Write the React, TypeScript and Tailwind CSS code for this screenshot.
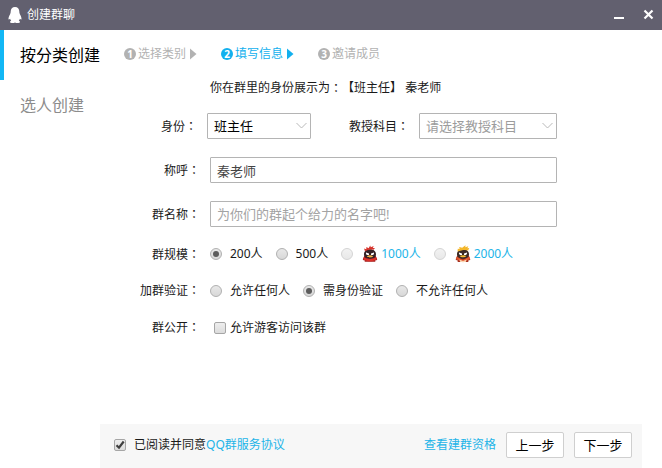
import { useState, type ReactNode } from "react";
import { clsx } from "clsx";

function PenguinLogo() {
  return (
    <svg width="14" height="18" viewBox="0 0 14 18" fill="#fff" aria-hidden="true">
      <path d="M7 1C4.300 1 2.700 3 2.700 5.600c0 1-.1 1.600-.6 2.600C1.100 9.900.4 11.500.5 13c.1.900.8.700 1.600-.2.200.8.500 1.400 1.100 2-.8.300-1.200.7-1.200 1.200 0 .8 1.200 1.100 2.500 1.100 1 0 1.900-.2 2.500-.6.600.4 1.500.6 2.500.6 1.300 0 2.500-.3 2.500-1.100 0-.5-.4-.9-1.200-1.200.6-.6.900-1.200 1.100-2 .8.900 1.500 1.100 1.600.2.100-1.500-.6-3.100-1.600-4.800-.5-1-.6-1.600-.6-2.600C11.300 3 9.700 1 7 1z" />
    </svg>
  );
}

function RedPenguin() {
  return (
    <svg width="16" height="18" viewBox="0 0 16 18" className="shrink-0" aria-hidden="true">
      <path d="M2.500 10.500.9 14c-.2 1.200.6 1.600 1.400.8l.5 1.900h10.400l.5-1.900c.8.800 1.600.4 1.400-.8l-1.600-3.500z" fill="#a31d1b" />
      <path d="M8 4.200c-3.700 0-6 2.200-6 5 0 2.900 2.400 4.600 6 4.600s6-1.700 6-4.600c0-2.800-2.300-5-6-5z" fill="#352125" />
      <path d="M3 6.300 2 3.500l2.300.7L4.400 2l2.200 1.300L8.200.6l.6 1.700L11.700.9l-.9 2 2.200.1-1.500 1.700C9.500 4.200 5.500 4.600 3 6.300z" fill="#d8322b" />
      <path d="M4 7.400 7 8.600v1.500H5.100C4.200 9.500 3.800 8.500 4 7.400z" fill="#fff" />
      <path d="M12 7.400 9 8.600v1.500h1.900c.9-.6 1.300-1.600 1.100-2.700z" fill="#fff" />
      <path d="M4.800 11.200C6.800 10 9.200 10 11.200 11.200c-1.200 1.600-5.200 1.600-6.400 0z" fill="#f0b24a" />
      <path d="M1.800 12.200c3.600 2.300 8.800 2.300 12.400 0l.3 2.200c-3.700 2.400-9.300 2.400-13 0z" fill="#dc3029" />
    </svg>
  );
}

function GoldPenguin() {
  return (
    <svg width="16" height="18" viewBox="0 0 16 18" className="shrink-0" aria-hidden="true">
      <path d="M2.200 10.500.8 14c-.2 1.200.6 1.600 1.400.8l.6 2.200h10.400l.6-2.200c.8.800 1.600.4 1.400-.8l-1.400-3.500z" fill="#a83220" />
      <path d="M8 4.200c-3.700 0-6 2.200-6 5 0 2.900 2.400 4.600 6 4.600s6-1.700 6-4.600c0-2.800-2.300-5-6-5z" fill="#3b2a25" />
      <path d="M2.500 6.500 2.800 3.800l1.800.2L4.200 2l3 .8L10.500.3l-.2 1.900 3-1-.9 2 1.900-.1-1.200 2.500C10.500 4.300 6.300 5.200 2.500 6.500z" fill="#f4b72a" />
      <path d="M4 7.600 7 8.600v1.500H5.100C4.200 9.600 3.800 8.600 4 7.600z" fill="#fff" />
      <path d="M12 7.600 9 8.600v1.500h1.900c.9-.5 1.300-1.500 1.100-2.500z" fill="#fff" />
      <path d="M4.600 11c2.200-1 4.600-1 6.800 0-1.300 1.800-5.500 1.800-6.800 0z" fill="#f7bf35" />
      <path d="M1.600 11.800 8 15l6.400-3.200.4 2.200L8 17.300 1.200 14z" fill="#e4572c" />
      <path d="M4.300 14.400 8 16l3.700-1.600-1 2.600H5.300z" fill="#fbd7b4" />
    </svg>
  );
}

// The TC face centres the full-width colon in its box
function Colon() {
  return <span className="font-['Noto_Sans_CJK_TC',sans-serif]">：</span>;
}

function Step({ index, label, active, last }: { index: number; label: string; active?: boolean; last?: boolean }) {
  return (
    <li
      aria-current={active ? "step" : undefined}
      className={clsx("flex items-center gap-0.5", active ? "text-[#12b0ee]" : "text-[#b2b2b2]")}
    >
      <span
        className={clsx(
          "grid size-3 place-items-center rounded-full text-[10px] leading-none font-bold text-white",
          active ? "bg-[#12b0ee]" : "bg-[#b2b2b2]"
        )}
      >
        {index}
      </span>
      <span>{label}</span>
      {!last && (
        <svg width="7" height="12" viewBox="0 0 7 12" fill="currentColor" className="ml-0.5" aria-hidden="true">
          <path d="M0 0.500 6.500 6 0 11.500z" />
        </svg>
      )}
    </li>
  );
}

function SelectBox({
  id,
  options,
  muted,
  className,
}: {
  id: string;
  options: string[];
  muted?: boolean;
  className?: string;
}) {
  return (
    <div className={clsx("relative", className)}>
      <select
        id={id}
        className={clsx(
          "h-[26px] w-full appearance-none rounded-[1px] border border-[#b4b4b4] bg-white px-1.5 text-[13px] outline-none",
          muted ? "text-[#9c9c9c]" : "text-black"
        )}
      >
        {options.map((o) => (
          <option key={o}>{o}</option>
        ))}
      </select>
      <svg
        width="11"
        height="7"
        viewBox="0 0 11 7"
        fill="none"
        stroke="#b9b9b9"
        className="pointer-events-none absolute top-1/2 right-1 -translate-y-1/2"
        aria-hidden="true"
      >
        <path d="M.5.5l5 5 5-5" />
      </svg>
    </div>
  );
}

function Field({ label, htmlFor, children }: { label: string; htmlFor: string; children: ReactNode }) {
  return (
    <div className="flex items-center gap-2.5">
      <label htmlFor={htmlFor} className="w-[100px] shrink-0 text-right">
        {label}
        <Colon />
      </label>
      {children}
    </div>
  );
}

function OptionRow({ label, children }: { label: string; children: ReactNode }) {
  return (
    <fieldset className="flex h-5 items-center gap-2.5">
      <legend className="float-left w-[100px] shrink-0 text-right">
        {label}
        <Colon />
      </legend>
      <div className="flex items-center gap-[13px]">{children}</div>
    </fieldset>
  );
}

function Radio({
  name,
  value,
  selected,
  onSelect,
  disabled,
  icon,
}: {
  name: string;
  value: string;
  selected?: string;
  onSelect?: (value: string) => void;
  disabled?: boolean;
  icon?: ReactNode;
}) {
  return (
    <label className={clsx("flex items-center gap-2 whitespace-nowrap", disabled && "text-[#22b4e8]")}>
      <span className="grid size-3 place-items-center">
        <input
          type="radio"
          name={name}
          value={value}
          checked={selected === value}
          disabled={disabled}
          onChange={() => onSelect?.(value)}
          className="peer col-start-1 row-start-1 size-3 appearance-none rounded-full border border-[#b0b0b0] bg-linear-to-b from-[#e8e8e8] to-[#d8d8d8] disabled:border-[#d4d4d4] disabled:from-[#f2f2f2] disabled:to-[#e8e8e8]"
        />
        <span className="pointer-events-none col-start-1 row-start-1 hidden size-1.5 rounded-full bg-[#5c5c5c] peer-checked:block" />
      </span>
      <span className={clsx("flex items-center gap-[3px]", icon && "pl-px")}>
        {icon}
        {value}
      </span>
    </label>
  );
}

function Checkbox({ id, defaultChecked }: { id: string; defaultChecked?: boolean }) {
  return (
    <span className="grid size-3 place-items-center">
      <input
        id={id}
        type="checkbox"
        defaultChecked={defaultChecked}
        className="peer col-start-1 row-start-1 size-3 appearance-none rounded-[2px] border border-[#a6a6a6] bg-linear-to-b from-[#eeeeee] to-[#dcdcdc]"
      />
      <svg
        width="10"
        height="10"
        viewBox="0 0 10 10"
        fill="none"
        stroke="#3f3f3f"
        strokeWidth="2.2"
        className="pointer-events-none col-start-1 row-start-1 hidden peer-checked:block"
        aria-hidden="true"
      >
        <path d="M1.500 5.200 4 7.700 8.700 1.500" />
      </svg>
    </span>
  );
}

const inputClass =
  "h-[26px] min-w-0 flex-1 rounded-[1px] border border-[#b4b4b4] bg-white px-1.5 text-[13px] text-[#444] outline-none placeholder:text-[#a3a3a3]";

const footerButtonClass =
  "h-[26px] w-[58px] rounded-[2px] border border-[#cfcfcf] bg-white text-[13px] text-black hover:bg-gray-50";

export default function App() {
  const [size, setSize] = useState("200人");
  const [verify, setVerify] = useState("需身份验证");

  return (
    <div className="flex min-h-screen flex-col bg-white font-['Noto_Sans','Noto_Sans_CJK_SC',sans-serif] text-[12px] leading-4 text-[#1a1a1a]">
      <header className="flex h-[30px] items-center bg-[#62606f] px-2 text-white">
        <PenguinLogo />
        <h1 className="ml-[5px] flex-1">创建群聊</h1>
        <div className="flex items-center gap-[18px]">
          <button type="button" aria-label="最小化">
            <svg width="12" height="12" viewBox="0 0 12 12" className="block" aria-hidden="true">
              <path d="M2 8h10v2H2z" fill="#fff" />
            </svg>
          </button>
          <button type="button" aria-label="关闭">
            <svg width="12" height="12" viewBox="0 0 12 12" className="block" aria-hidden="true">
              <path d="M2.500 1.500l8 8M10.500 1.500l-8 8" stroke="#fff" strokeWidth="2.200" />
            </svg>
          </button>
        </div>
      </header>

      <div className="flex flex-1">
        <nav className="w-[100px] shrink-0 text-[16px] whitespace-nowrap">
          <a href="#category" className="flex h-[50px] items-center border-l-4 border-[#12b7f5] pl-4 text-black">
            按分类创建
          </a>
          <a href="#people" className="flex h-[50px] items-center border-l-4 border-transparent pl-4 text-[#8c8c8c]">
            选人创建
          </a>
        </nav>

        <main className="flex min-w-0 flex-1 flex-col">
          <ol className="flex h-12 items-center gap-6 pl-6">
            <Step index={1} label="选择类别" />
            <Step index={2} label="填写信息" active />
            <Step index={3} label="邀请成员" last />
          </ol>

          <form className="flex flex-1 flex-col" onSubmit={(e) => e.preventDefault()}>
            <div className="flex flex-col pr-[105px]">
              <p className="flex h-5 items-center pl-[110px] whitespace-pre">
                你在群里的身份展示为
                <Colon />
                【班主任】 秦老师
              </p>

              <div className="mt-[15px] flex flex-col gap-[18px]">
                <div className="flex items-center gap-2.5">
                  <label htmlFor="role" className="w-[97px] shrink-0 text-right">
                    身份
                    <Colon />
                  </label>
                  <SelectBox id="role" options={["班主任", "老师", "学生"]} className="w-[104px]" />
                  <label htmlFor="subject" className="ml-auto shrink-0">
                    教授科目
                    <Colon />
                  </label>
                  <SelectBox id="subject" options={["请选择教授科目", "语文", "数学"]} muted className="w-[138px]" />
                </div>
                <Field label="称呼" htmlFor="nickname">
                  <input id="nickname" type="text" defaultValue="秦老师" className={inputClass} />
                </Field>
                <Field label="群名称" htmlFor="groupName">
                  <input id="groupName" type="text" placeholder="为你们的群起个给力的名字吧!" className={inputClass} />
                </Field>
              </div>

              <div className="mt-[18px] flex flex-col gap-[17px]">
                <OptionRow label="群规模">
                  <Radio name="size" value="200人" selected={size} onSelect={setSize} />
                  <Radio name="size" value="500人" selected={size} onSelect={setSize} />
                  <Radio name="size" value="1000人" disabled icon={<RedPenguin />} />
                  <Radio name="size" value="2000人" disabled icon={<GoldPenguin />} />
                </OptionRow>
                <OptionRow label="加群验证">
                  <Radio name="verify" value="允许任何人" selected={verify} onSelect={setVerify} />
                  <Radio name="verify" value="需身份验证" selected={verify} onSelect={setVerify} />
                  <Radio name="verify" value="不允许任何人" selected={verify} onSelect={setVerify} />
                </OptionRow>
                <OptionRow label="群公开">
                  <label htmlFor="guest" className="flex items-center gap-1 pl-1">
                    <Checkbox id="guest" />
                    允许游客访问该群
                  </label>
                </OptionRow>
              </div>
            </div>

            <footer className="mt-auto mr-5 flex items-center gap-2.5 bg-[#f7f7f7] pt-2 pr-2.5 pb-2.5 pl-3.5">
              <div className="flex flex-1 items-center">
                <Checkbox id="agree" defaultChecked />
                <label htmlFor="agree" className="pl-2">
                  已阅读并同意
                </label>
                <a href="#terms" className="text-[#22b4e8]">
                  QQ群服务协议
                </a>
              </div>
              <a href="#rules" className="text-[#22b4e8]">
                查看建群资格
              </a>
              <button type="button" className={footerButtonClass}>
                上一步
              </button>
              <button type="submit" className={footerButtonClass}>
                下一步
              </button>
            </footer>
          </form>
        </main>
      </div>
    </div>
  );
}
